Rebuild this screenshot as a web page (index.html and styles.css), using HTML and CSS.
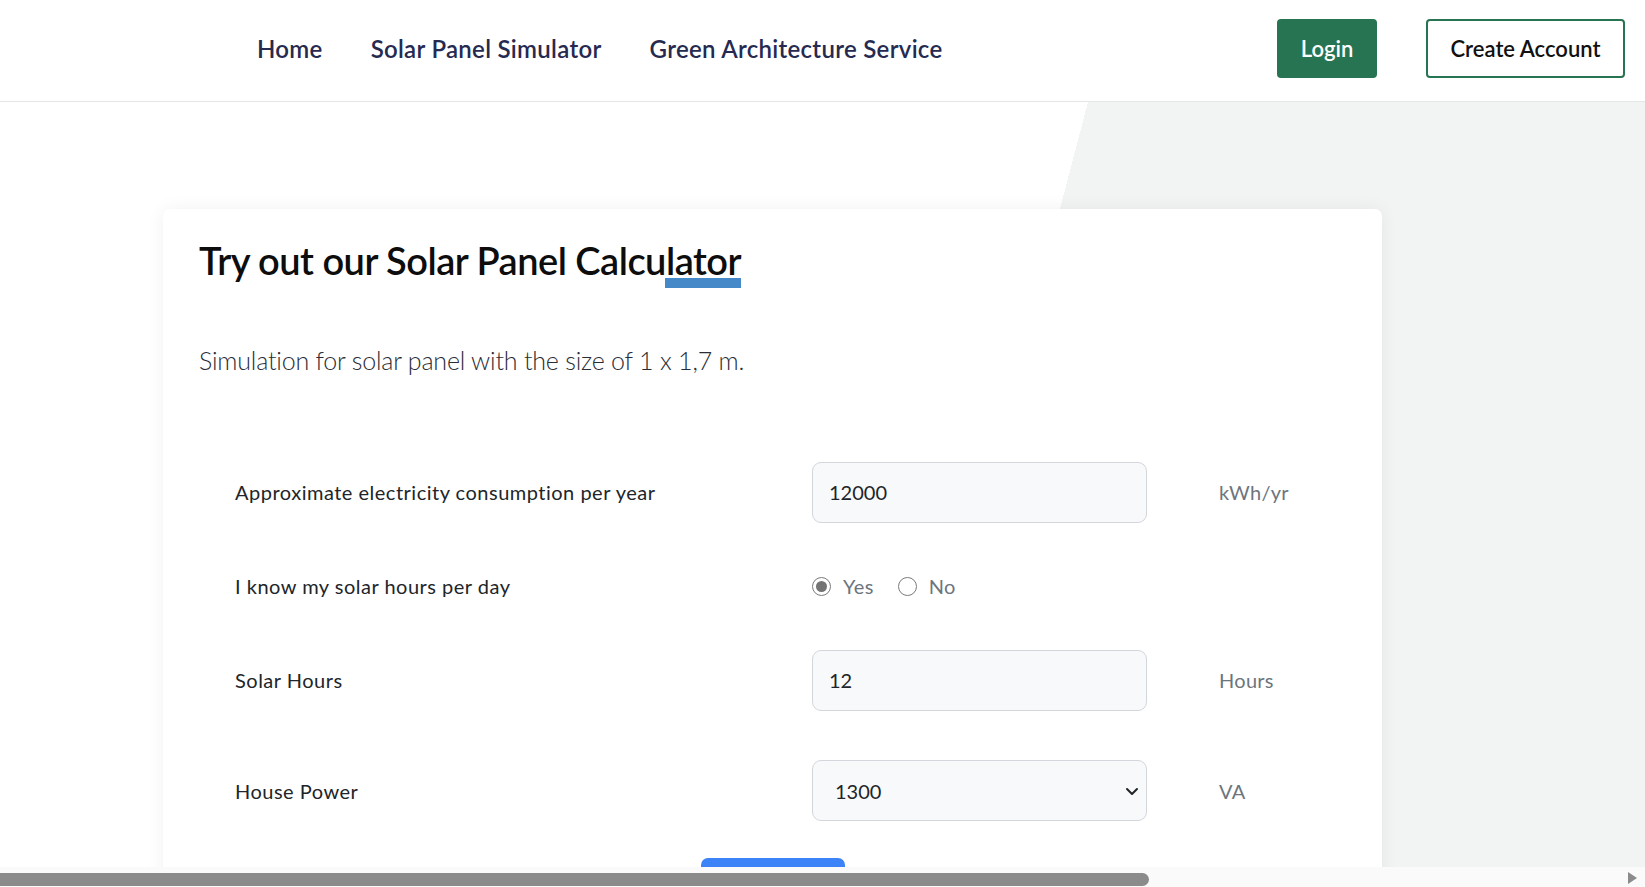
FILE: index.html
```html
<!DOCTYPE html>
<html lang="en">
<head>
<meta charset="utf-8">
<title>Solar Panel Calculator</title>
<link rel="stylesheet" href="styles.css">
</head>
<body>
<header class="topbar">
  <nav class="nav-links">
    <a class="nav-link" href="#">Home</a>
    <a class="nav-link" href="#">Solar Panel Simulator</a>
    <a class="nav-link" href="#">Green Architecture Service</a>
  </nav>
  <div class="auth">
    <a class="btn-login" href="#">Login</a>
    <a class="btn-create" href="#">Create Account</a>
  </div>
</header>

<main class="hero">
  <section class="card">
    <h2 class="card-title"><span class="title-text">Try out our Solar Panel Calculator</span></h2>
    <p class="lead">Simulation for solar panel with the size of 1 x 1,7 m.</p>

    <form class="calc-form">
      <label class="field-label">Approximate electricity consumption per year</label>
      <input class="field-input" type="text" value="12000">
      <span class="unit">kWh/yr</span>

      <span class="field-label">I know my solar hours per day</span>
      <div class="radio-group">
        <label class="radio-opt"><input class="radio" type="radio" name="know" checked><span>Yes</span></label>
        <label class="radio-opt"><input class="radio" type="radio" name="know"><span>No</span></label>
      </div>
      <span class="unit"></span>

      <label class="field-label">Solar Hours</label>
      <input class="field-input" type="text" value="12">
      <span class="unit">Hours</span>

      <label class="field-label">House Power</label>
      <select class="field-select">
        <option>1300</option>
        <option>2200</option>
        <option>3500</option>
      </select>
      <span class="unit">VA</span>
    </form>

    <div class="actions">
      <button class="btn-calc" type="button">Calculate</button>
    </div>
  </section>
</main>

<div class="hscroll">
  <div class="hscroll-thumb"></div>
  <div class="hscroll-arrow"></div>
</div>
</body>
</html>
```

FILE: styles.css
```css
html, body {
  margin: 0;
  padding: 0;
  overflow: hidden;
  height: 100%;
}

body {
  font-family: "Lato", "Open Sans", sans-serif;
  color: #212529;
  background: #fff;
}

/* ---------- top bar ---------- */
.topbar {
  height: 102px;
  box-sizing: border-box;
  display: flex;
  align-items: center;
  padding: 0 20px 4px 257px;
  border-bottom: 1px solid #e5e6e6;
  background: #fff;
}

.nav-links {
  display: flex;
  gap: 48px;
}

.nav-link {
  font-size: 24px;
  font-weight: 600;
  letter-spacing: 0.3px;
  color: #262a50;
  text-decoration: none;
}

.auth {
  margin-left: auto;
  display: flex;
  gap: 49px;
}

.btn-login,
.btn-create {
  height: 59px;
  box-sizing: border-box;
  display: inline-flex;
  align-items: center;
  justify-content: center;
  font-size: 22px;
  font-weight: 600;
  text-decoration: none;
  border-radius: 4px;
}

.btn-login {
  width: 100px;
  background: #277452;
  color: #fff;
}

.btn-create {
  width: 199px;
  border: 2px solid #277452;
  color: #111;
  background: #fff;
}

/* ---------- hero ---------- */
.hero {
  min-height: 800px;
  padding: 107px 0 0 163px;
  background-color: #f1f4f3;
  background-image: linear-gradient(104.67deg, #ffffff 1052.5px, #f1f4f3 1052.5px);
  background-size: 1645px 800px;
  background-repeat: no-repeat;
}

.card {
  width: 1219px;
  box-sizing: border-box;
  background: #fff;
  border-radius: 7px;
  box-shadow: 0 0 18px rgba(0, 0, 0, 0.06);
  padding: 27px 36px 40px;
}

.card-title {
  margin: 0;
  font-size: 38px;
  line-height: 48px;
  font-weight: 600;
  letter-spacing: -0.5px;
  color: #0d0d0d;
}

.title-text {
  position: relative;
  display: inline-block;
}

.title-text::after {
  content: "";
  position: absolute;
  right: 0;
  top: 42px;
  width: 76px;
  height: 10px;
  background: #4589c8;
}

.lead {
  margin: 58px 0 0;
  font-size: 25px;
  line-height: 37.5px;
  font-weight: 300;
  letter-spacing: -0.2px;
  color: #2a2d36;
}

/* ---------- form ---------- */
.calc-form {
  margin-top: 82px;
  padding-left: 36px;
  display: grid;
  grid-template-columns: 577px 335px 1fr;
  row-gap: 49.5px;
  align-items: center;
}

.field-label {
  font-size: 20px;
  letter-spacing: 0.5px;
  color: #212529;
}

.field-input,
.field-select {
  width: 335px;
  height: 61px;
  box-sizing: border-box;
  border: 1px solid #d3d6da;
  border-radius: 9px;
  background-color: #f8f9fa;
  font-family: inherit;
  font-size: 20px;
  color: #212529;
  padding: 0 16px;
  outline: none;
}

.field-select {
  appearance: none;
  -webkit-appearance: none;
  padding-left: 22px;
  background-image: url("data:image/svg+xml,%3csvg xmlns='http://www.w3.org/2000/svg' viewBox='0 0 16 16'%3e%3cpath fill='none' stroke='%23212529' stroke-linecap='round' stroke-linejoin='round' stroke-width='2' d='M3 6l5 5 5-5'/%3e%3c/svg%3e");
  background-repeat: no-repeat;
  background-position: right 6px center;
  background-size: 16px 16px;
}

.unit {
  padding-left: 72px;
  font-size: 20px;
  letter-spacing: 0.3px;
  color: #6c757d;
}

.radio-group {
  height: 28px;
  display: flex;
  align-items: center;
  gap: 24px;
}

.radio-opt {
  display: flex;
  align-items: center;
  gap: 12px;
  font-size: 20px;
  letter-spacing: 0.4px;
  color: #6c757d;
}

.radio {
  appearance: none;
  -webkit-appearance: none;
  margin: 0;
  width: 19px;
  height: 19px;
  box-sizing: border-box;
  border: 1.5px solid #7a7a7a;
  border-radius: 50%;
  background: #fff;
  display: inline-grid;
  place-items: center;
}

.radio:checked::before {
  content: "";
  width: 11px;
  height: 11px;
  border-radius: 50%;
  background: #747474;
}

.actions {
  display: flex;
  justify-content: center;
  margin-top: 37px;
}

.btn-calc {
  width: 144px;
  height: 52px;
  border: none;
  border-radius: 7px;
  background: #3b83f6;
  color: #fff;
  font-family: inherit;
  font-size: 20px;
}

/* ---------- fake horizontal scrollbar ---------- */
.hscroll {
  position: fixed;
  left: 0;
  right: 0;
  bottom: 0;
  height: 20px;
  background: #fafafa;
}

.hscroll-thumb {
  position: absolute;
  left: 0;
  top: 6px;
  width: 1149px;
  height: 13px;
  background: #8b8b8b;
  border-radius: 0 7px 7px 0;
}

.hscroll-arrow {
  position: absolute;
  right: 8px;
  top: 5px;
  width: 0;
  height: 0;
  border-top: 6px solid transparent;
  border-bottom: 6px solid transparent;
  border-left: 9px solid #8b8b8b;
}
```
